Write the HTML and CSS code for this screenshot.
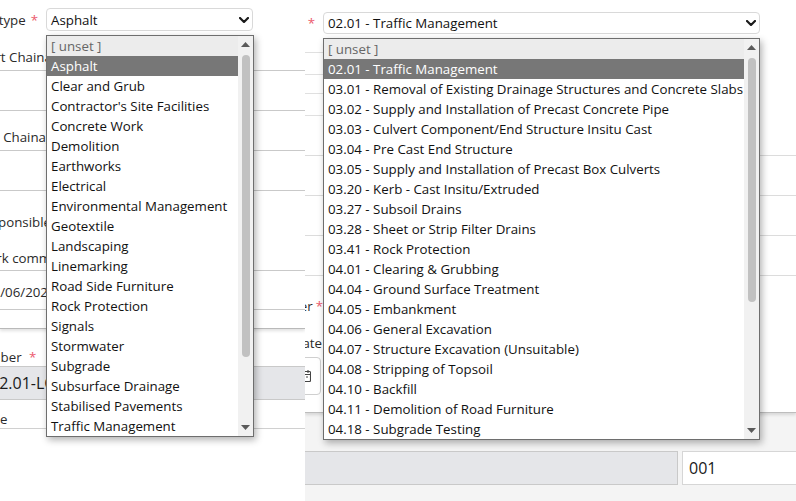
FILE: index.html
```html
<!DOCTYPE html>
<html lang="en">
<head>
<meta charset="utf-8">
<title>Activity form</title>
<link rel="stylesheet" href="styles.css">
</head>
<body>
<div class="page">
  <section class="pane pane-left">
    <div class="card card-left">
      <div class="top-row top-left">
        <div class="lbl-end lbl-type"><span class="lbl-text">Activity type</span><span class="req">*</span></div>
        <div class="select sel-left"><span class="sel-value">Asphalt</span><svg class="chev" viewBox="0 0 10 6" width="10" height="6"><path d="M1 1 5 5 9 1"/></svg></div>
      </div>
      <div class="frow fr-1"><span class="flabel">Start Chainage</span></div>
      <div class="frow fr-2"></div>
      <div class="frow fr-3"><span class="flabel">End Chainage</span></div>
      <div class="frow fr-4"></div>
      <div class="frow fr-5"><span class="flabel">Responsible Person</span><span class="flabel fl-gap">Work commenced</span></div>
      <div class="frow fr-6"><span class="flabel fl-date">12/06/2024</span></div>
      <div class="frow fr-7"></div>
    </div>
    <div class="lower-left">
      <div class="flabel fl-num">Lot Number <span class="req">*</span></div>
      <div class="ginput gi-left">02.01-LC-0001</div>
      <div class="frow fr-type"><span class="flabel fl-type">Type</span></div>
    </div>

    <div class="dropdown dd-left">
      <ul class="opts">
        <li class="opt opt-unset">[ unset ]</li>
        <li class="opt opt-sel">Asphalt</li>
        <li class="opt">Clear and Grub</li>
        <li class="opt">Contractor's Site Facilities</li>
        <li class="opt">Concrete Work</li>
        <li class="opt">Demolition</li>
        <li class="opt">Earthworks</li>
        <li class="opt">Electrical</li>
        <li class="opt">Environmental Management</li>
        <li class="opt">Geotextile</li>
        <li class="opt">Landscaping</li>
        <li class="opt">Linemarking</li>
        <li class="opt">Road Side Furniture</li>
        <li class="opt">Rock Protection</li>
        <li class="opt">Signals</li>
        <li class="opt">Stormwater</li>
        <li class="opt">Subgrade</li>
        <li class="opt">Subsurface Drainage</li>
        <li class="opt">Stabilised Pavements</li>
        <li class="opt">Traffic Management</li>
      </ul>
      <div class="sbar">
        <div class="sb-btn"><svg viewBox="0 0 9 5" width="9" height="5"><path d="M0 5 4.5 0 9 5Z"/></svg></div>
        <div class="sb-track"><div class="sb-thumb thumb-left"></div></div>
        <div class="sb-btn"><svg viewBox="0 0 9 5" width="9" height="5"><path d="M0 0 4.5 5 9 0Z"/></svg></div>
      </div>
    </div>
  </section>

  <section class="pane pane-right">
    <div class="card card-right">
      <div class="top-row top-right">
        <div class="lbl-end lbl-pkg"><span class="lbl-text">Work Package</span><span class="req">*</span></div>
        <div class="select sel-right"><span class="sel-value">02.01 - Traffic Management</span><svg class="chev" viewBox="0 0 10 6" width="10" height="6"><path d="M1 1 5 5 9 1"/></svg></div>
      </div>
      <div class="mini-table">
        <div class="mrow mr-1"></div>
        <div class="mrow mr-2"></div>
        <div class="mrow mr-3"></div>
      </div>
      <div class="rrow"></div>
      <div class="rrow"></div>
      <div class="rrow"></div>
      <div class="rrow"></div>
      <div class="stack">
        <div class="slabel sl-order"><span class="lbl-text">Work Order Number</span><span class="req">*</span></div>
        <div class="slabel sl-date"><span class="lbl-text">Date</span></div>
        <div class="date-box">
          <svg class="cal" viewBox="0 0 11 12" width="11" height="12"><rect x="0.5" y="1.5" width="10" height="10" rx="1"/><path d="M0.5 4.5h10M3 0v3M8 0v3M3 7h2M6 7h2M3 9h2"/></svg>
        </div>
      </div>
    </div>
    <div class="lower-right">
      <div class="ginput gi-right"></div>
      <div class="winput">001</div>
    </div>

    <div class="dropdown dd-right">
      <ul class="opts">
        <li class="opt opt-unset">[ unset ]</li>
        <li class="opt opt-sel">02.01 - Traffic Management</li>
        <li class="opt">03.01 - Removal of Existing Drainage Structures and Concrete Slabs</li>
        <li class="opt">03.02 - Supply and Installation of Precast Concrete Pipe</li>
        <li class="opt">03.03 - Culvert Component/End Structure Insitu Cast</li>
        <li class="opt">03.04 - Pre Cast End Structure</li>
        <li class="opt">03.05 - Supply and Installation of Precast Box Culverts</li>
        <li class="opt">03.20 - Kerb - Cast Insitu/Extruded</li>
        <li class="opt">03.27 - Subsoil Drains</li>
        <li class="opt">03.28 - Sheet or Strip Filter Drains</li>
        <li class="opt">03.41 - Rock Protection</li>
        <li class="opt">04.01 - Clearing &amp; Grubbing</li>
        <li class="opt">04.04 - Ground Surface Treatment</li>
        <li class="opt">04.05 - Embankment</li>
        <li class="opt">04.06 - General Excavation</li>
        <li class="opt">04.07 - Structure Excavation (Unsuitable)</li>
        <li class="opt">04.08 - Stripping of Topsoil</li>
        <li class="opt">04.10 - Backfill</li>
        <li class="opt">04.11 - Demolition of Road Furniture</li>
        <li class="opt">04.18 - Subgrade Testing</li>
      </ul>
      <div class="sbar">
        <div class="sb-btn"><svg viewBox="0 0 9 5" width="9" height="5"><path d="M0 5 4.5 0 9 5Z"/></svg></div>
        <div class="sb-track"><div class="sb-thumb thumb-right"></div></div>
        <div class="sb-btn"><svg viewBox="0 0 9 5" width="9" height="5"><path d="M0 0 4.5 5 9 0Z"/></svg></div>
      </div>
    </div>
  </section>
</div>
</body>
</html>
```

FILE: styles.css
```css
* { box-sizing: border-box; }
html, body { margin: 0; padding: 0; }
body {
  width: 796px;
  height: 501px;
  overflow: hidden;
  background: #fff;
  font-family: "Open Sans", "Noto Sans", sans-serif;
  font-size: 13.3px;
  color: #111;
}
.page { display: flex; width: 796px; height: 501px; }
.pane { position: relative; height: 501px; overflow: hidden; flex-shrink: 0; }
.pane-left { width: 305px; background: #fff; }
.pane-right { width: 491px; background: #f4f4f4; }

.req { color: #ec5a6e; margin-left: 5px; }

/* ---------- top row with select ---------- */
.top-row { display: flex; align-items: center; }
.top-left { height: 40px; padding-top: 8px; align-items: flex-start; gap: 8px; }
.top-right { height: 52px; padding-top: 12px; align-items: flex-start; gap: 8px; }
.lbl-end {
  display: flex;
  justify-content: flex-end;
  align-items: center;
  white-space: nowrap;
  flex-shrink: 0;
  color: #2a2a2a;
}
.lbl-type { width: 38px; height: 23px; }
.lbl-pkg { width: 10px; height: 22px; }
.lbl-text { flex-shrink: 0; }

.select {
  display: flex;
  align-items: center;
  justify-content: space-between;
  flex-shrink: 0;
  border: 1px solid #d9d9d9;
  border-radius: 4px;
  background: #fff;
  padding: 0 3px 0 4px;
  color: #111;
  white-space: nowrap;
}
.sel-left { width: 207px; height: 23px; }
.sel-right { width: 437px; height: 22px; }
.chev { fill: none; stroke: #1a1a1a; stroke-width: 2.2; stroke-linecap: round; stroke-linejoin: round; flex-shrink: 0; }

/* ---------- left card rows ---------- */
.card-left { border-bottom: 1px solid #b9b9b9; box-shadow: 0 2px 3px rgba(0,0,0,0.12); background: #fff; position: relative; }
.frow { border-bottom: 1px solid #c9c9c9; display: flex; flex-direction: column; align-items: flex-start; white-space: nowrap; }
.flabel { display: block; line-height: 18px; color: #2a2a2a; margin-left: -24px; white-space: nowrap; }
.fr-1 { height: 31px; padding-top: 8px; }
.fr-2 { height: 40px; }
.fr-3 { height: 40px; padding-top: 17px; }
.fr-4 { height: 40px; }
.fr-5 { height: 80px; padding-top: 22px; }
.fl-gap { margin-top: 18px; }
.fr-6 { height: 39px; padding-top: 12px; }
.fl-date { margin-left: -15px; }
.fr-7 { height: 18px; border-bottom: none; }

.lower-left { background: #fff; padding-top: 19px; }
.fl-num { margin-left: -53px; }
.fl-num .req { margin-left: 4px; }
.ginput {
  height: 34px;
  background: #e5e6e9;
  border: 1px solid #c9c9c9;
  font-size: 16px;
  line-height: 32px;
  color: #1a1a1a;
  white-space: nowrap;
  flex-shrink: 0;
}
.gi-left { margin-left: -20px; width: 345px; padding-left: 9px; }
.fr-type { height: 29px; padding-top: 10px; border-bottom: 1px solid #d0d0d0; }
.fl-type { margin-left: -22px; }

/* ---------- right card ---------- */
.card-right { background: #fff; border-bottom: 1px solid #bdbdbd; box-shadow: 0 2px 3px rgba(0,0,0,0.12); padding-bottom: 17px; position: relative; }
.mini-table { width: 300px; border-top: 1px solid #e0e0e0; }
.mrow { border-bottom: 1px solid #e0e0e0; }
.mr-1 { height: 22px; }
.mr-2 { height: 19px; }
.mr-3 { height: 22px; }
.rrow { height: 40px; border-bottom: 1px solid #dcdcdc; }
.stack { width: 18px; display: flex; flex-direction: column; align-items: flex-end; }
.slabel { display: flex; justify-content: flex-end; white-space: nowrap; line-height: 18px; color: #2a2a2a; }
.sl-order { margin-top: 21px; }
.sl-order .req { margin-left: 3px; }
.sl-date { margin-top: 19px; margin-right: 1px; }
.date-box {
  margin-top: 5px;
  margin-right: 2px;
  width: 160px;
  height: 38px;
  border: 1px solid #cfcfcf;
  border-radius: 4px;
  background: #fff;
  display: flex;
  align-items: center;
  justify-content: flex-end;
  padding-right: 9px;
  flex-shrink: 0;
}
.cal { fill: none; stroke: #444; stroke-width: 1.1; }

.lower-right { display: flex; gap: 4px; padding-top: 38px; }
.gi-right { margin-left: -10px; width: 383px; }
.winput {
  flex-shrink: 0;
  width: 160px;
  height: 34px;
  border: 1px solid #d6d6d6;
  background: #fff;
  font-size: 16px;
  line-height: 32px;
  padding-left: 6px;
  color: #1a1a1a;
}

/* ---------- dropdown popups ---------- */
.dropdown {
  position: absolute;
  display: flex;
  background: #fff;
  border: 1px solid #6e6e6e;
  box-shadow: 2px 3px 7px rgba(0,0,0,0.3);
}
.dd-left { left: 46px; top: 35px; width: 208px; height: 402px; }
.dd-right { left: 18px; top: 38px; width: 437px; height: 402px; }
.opts { flex: 1; min-width: 0; list-style: none; margin: 0; padding: 0; }
.opt {
  height: 20px;
  line-height: 20px;
  padding-left: 4px;
  white-space: nowrap;
  overflow: hidden;
  color: #111;
}
.opt-unset { background: #ececec; color: #666; }
.opt-sel { background: #777; color: #fff; }
.sbar { width: 15px; flex-shrink: 0; background: #f1f1f1; display: flex; flex-direction: column; }
.sb-btn { height: 17px; display: flex; align-items: center; justify-content: center; }
.sb-btn svg { fill: #5a5a5a; }
.sb-track { flex: 1; display: flex; flex-direction: column; align-items: center; }
.sb-thumb { width: 8px; margin-top: 2px; border-radius: 4px; background: #c1c1c1; }
.thumb-left { height: 302px; }
.thumb-right { height: 244px; }
```
